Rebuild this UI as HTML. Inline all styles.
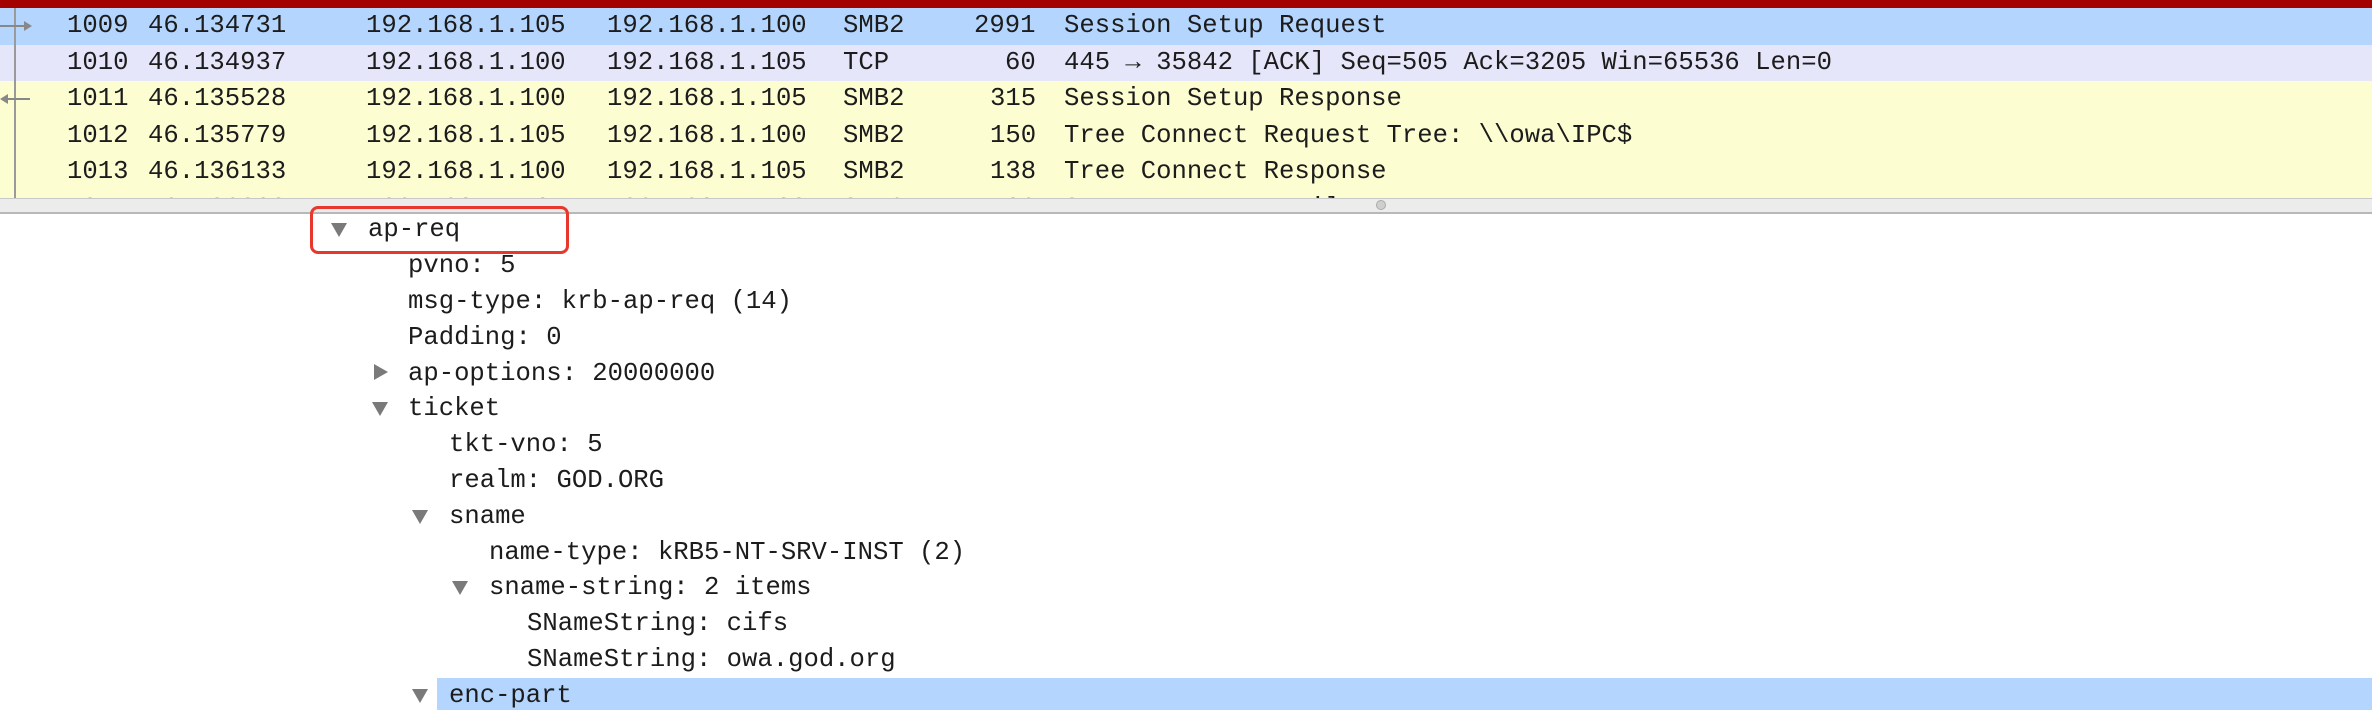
<!DOCTYPE html>
<html><head><meta charset="utf-8"><style>
*{margin:0;padding:0;box-sizing:border-box}
html,body{width:2372px;height:710px;overflow:hidden;background:#fff}
body{position:relative;font-family:"Liberation Mono","DejaVu Sans Mono",monospace;font-size:25.6px;color:#1c1c1c}
.bar{position:absolute;left:0;top:0;width:2372px;height:8px;background:#a30000}
.row{position:absolute;left:0;width:2372px;height:36.5px;line-height:36.5px;white-space:pre}
.row span{position:absolute;top:0}
.sel{background:#b4d6fe}
.lav{background:#e6e6fa}
.yel{background:#fdfdd2}
.vl{position:absolute;left:14px;top:8px;width:2px;height:190px;background:#9a9a9a}
.div{position:absolute;left:0;top:198px;width:2372px;height:16px;background:#ececec;border-top:1px solid #c8c8c8;border-bottom:2px solid #b8b8b8}
.dot{position:absolute;left:1376px;top:200px;width:10px;height:10px;border-radius:50%;background:#cfcfcf;border:1px solid #aaa}
.t{position:absolute;height:36px;line-height:36px;white-space:pre}
.tri{position:absolute;width:0;height:0}
.down{border-left:8px solid transparent;border-right:8px solid transparent;border-top:14px solid #7a7a7a}
.right{border-top:8px solid transparent;border-bottom:8px solid transparent;border-left:14px solid #7a7a7a}
.box{position:absolute;left:310px;top:206px;width:259px;height:48px;border:3.5px solid #e8372c;border-radius:8px}
.hl{position:absolute;left:437px;top:678px;width:1935px;height:32px;background:#b4d6fe}
</style></head><body>
<div class="bar"></div>
<div class="row sel" style="top:8px"><span style="left:67px">1009</span><span style="left:148px">46.134731</span><span style="left:366px">192.168.1.105</span><span style="left:607px">192.168.1.100</span><span style="left:843px">SMB2</span><span style="left:974px">2991</span><span style="left:1064px">Session Setup Request</span></div>
<div class="row lav" style="top:44.5px"><span style="left:67px">1010</span><span style="left:148px">46.134937</span><span style="left:366px">192.168.1.100</span><span style="left:607px">192.168.1.105</span><span style="left:843px">TCP</span><span style="left:1005px">60</span><span style="left:1064px">445 → 35842 [ACK] Seq=505 Ack=3205 Win=65536 Len=0</span></div>
<div class="row yel" style="top:81px"><span style="left:67px">1011</span><span style="left:148px">46.135528</span><span style="left:366px">192.168.1.100</span><span style="left:607px">192.168.1.105</span><span style="left:843px">SMB2</span><span style="left:990px">315</span><span style="left:1064px">Session Setup Response</span></div>
<div class="row yel" style="top:117.5px"><span style="left:67px">1012</span><span style="left:148px">46.135779</span><span style="left:366px">192.168.1.105</span><span style="left:607px">192.168.1.100</span><span style="left:843px">SMB2</span><span style="left:990px">150</span><span style="left:1064px">Tree Connect Request Tree: \\owa\IPC$</span></div>
<div class="row yel" style="top:154px"><span style="left:67px">1013</span><span style="left:148px">46.136133</span><span style="left:366px">192.168.1.100</span><span style="left:607px">192.168.1.105</span><span style="left:843px">SMB2</span><span style="left:990px">138</span><span style="left:1064px">Tree Connect Response</span></div>
<div class="row yel" style="top:190.5px;height:7.5px;overflow:hidden"><span style="left:67px">1014</span><span style="left:148px">46.136303</span><span style="left:366px">192.168.1.105</span><span style="left:607px">192.168.1.100</span><span style="left:843px">SMB2</span><span style="left:990px">182</span><span style="left:1064px">Create Request File</span></div>
<div class="vl"></div>
<div style="position:absolute;left:0;top:25px;width:30px;height:2px;background:#888"></div>
<div style="position:absolute;left:24px;top:21px;border-top:5px solid transparent;border-bottom:5px solid transparent;border-left:8px solid #888"></div>
<div style="position:absolute;left:4px;top:98px;width:26px;height:2px;background:#888"></div>
<div style="position:absolute;left:0;top:94px;border-top:5px solid transparent;border-bottom:5px solid transparent;border-right:8px solid #888"></div>
<div class="div"></div><div class="dot"></div>
<div class="hl"></div>
<div class="tri down" style="left:331px;top:223px"></div><div class="t" style="left:368px;top:212px">ap-req</div>
<div class="t" style="left:408px;top:248px">pvno: 5</div>
<div class="t" style="left:408px;top:284px">msg-type: krb-ap-req (14)</div>
<div class="t" style="left:408px;top:320px">Padding: 0</div>
<div class="tri right" style="left:374px;top:364px"></div><div class="t" style="left:408px;top:356px">ap-options: 20000000</div>
<div class="tri down" style="left:372px;top:402px"></div><div class="t" style="left:408px;top:391px">ticket</div>
<div class="t" style="left:449px;top:427px">tkt-vno: 5</div>
<div class="t" style="left:449px;top:463px">realm: GOD.ORG</div>
<div class="tri down" style="left:412px;top:510px"></div><div class="t" style="left:449px;top:499px">sname</div>
<div class="t" style="left:489px;top:535px">name-type: kRB5-NT-SRV-INST (2)</div>
<div class="tri down" style="left:452px;top:581px"></div><div class="t" style="left:489px;top:570px">sname-string: 2 items</div>
<div class="t" style="left:527px;top:606px">SNameString: cifs</div>
<div class="t" style="left:527px;top:642px">SNameString: owa.god.org</div>
<div class="tri down" style="left:412px;top:689px"></div><div class="t" style="left:449px;top:678px">enc-part</div>
<div class="box"></div>
</body></html>
